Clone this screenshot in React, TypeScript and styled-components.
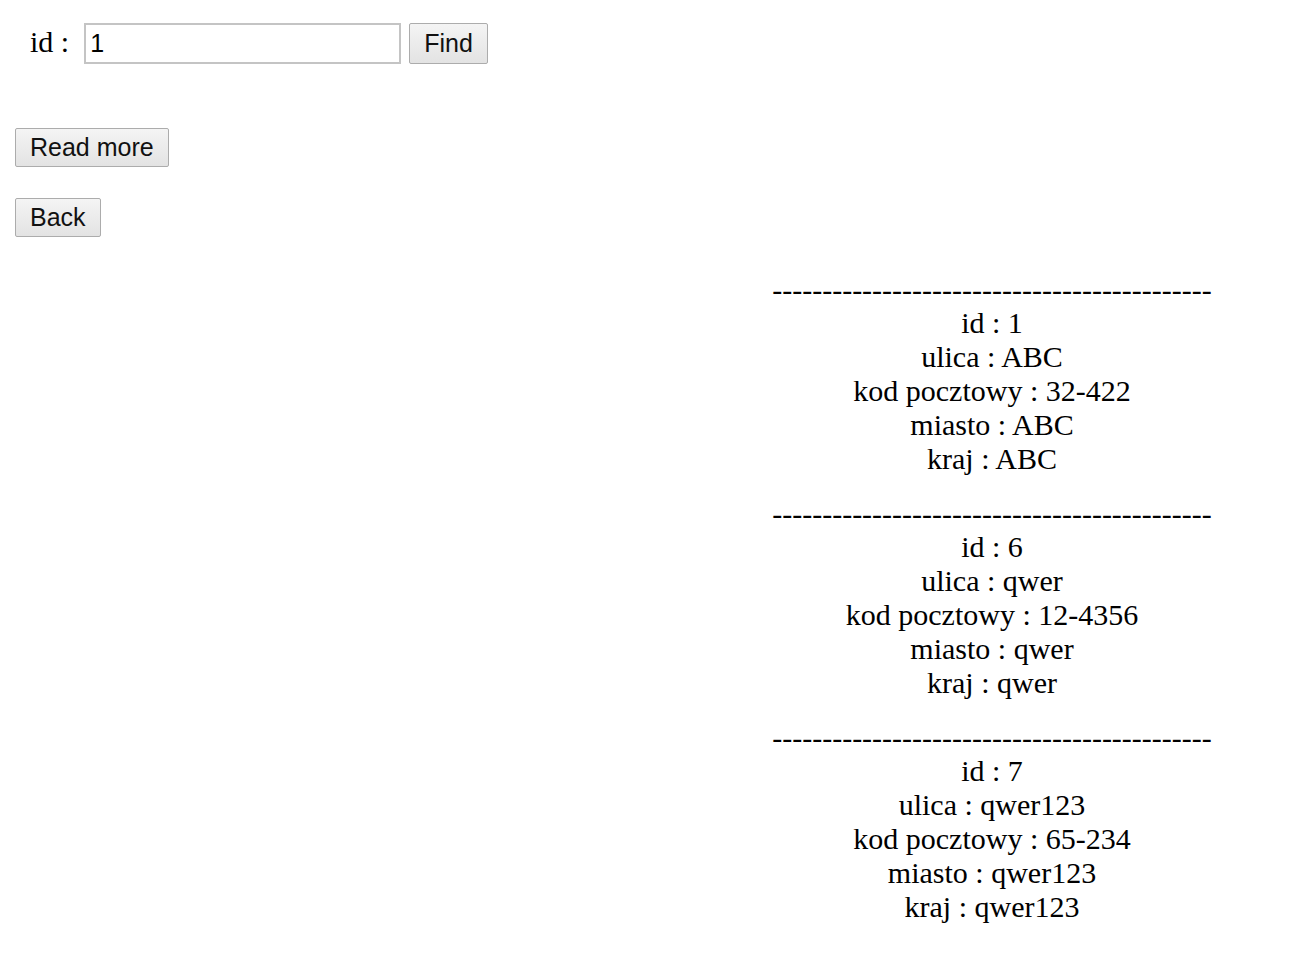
import React from 'react'
import styled, { createGlobalStyle } from 'styled-components'

const GlobalStyle = createGlobalStyle`
  body {
    margin: 0;
    background: #fff;
    color: #000;
    font-family: "Liberation Serif", "Times New Roman", serif;
    font-size: 30px;
  }
`

const Page = styled.div`
  padding: 23px 15px 40px 15px;
`

const SearchRow = styled.form`
  display: flex;
  align-items: center;
  padding-left: 15px;
  height: 41px;
`

const Label = styled.label`
  margin-right: 15px;
  line-height: 1;
  position: relative;
  top: -2px;
`

const TextInput = styled.input`
  box-sizing: border-box;
  width: 317px;
  height: 41px;
  border: 2px solid #c4c4c4;
  padding: 0 4px;
  font-family: "Liberation Sans", Arial, sans-serif;
  font-size: 25px;
  color: #000;
  outline: none;
`

const Button = styled.button<{ $gap?: number }>`
  box-sizing: border-box;
  height: ${p => p.$gap ? 41 : 39}px;
  padding: 0 14px;
  margin-left: ${p => p.$gap ?? 0}px;
  border: 1px solid #acacac;
  border-radius: 2px;
  background: linear-gradient(#f4f4f4, #e3e3e3);
  font-family: "Liberation Sans", Arial, sans-serif;
  font-size: 25px;
  color: #111;
  cursor: pointer;
`

const Actions = styled.div`
  display: flex;
  flex-direction: column;
  align-items: flex-start;
  gap: 31px;
  margin-top: 64px;
`

const Records = styled.div`
  width: 440px;
  margin: 35px 0 0 757px;
  text-align: center;
  line-height: 34px;
`

const Record = styled.div`
  margin-bottom: 20px;
`

const Divider = styled.div`
  white-space: nowrap;
  position: relative;
  top: 1px;
`

interface Address {
  id: number
  ulica: string
  kod: string
  miasto: string
  kraj: string
}

const addresses: Address[] = [
  { id: 1, ulica: 'ABC', kod: '32-422', miasto: 'ABC', kraj: 'ABC' },
  { id: 6, ulica: 'qwer', kod: '12-4356', miasto: 'qwer', kraj: 'qwer' },
  { id: 7, ulica: 'qwer123', kod: '65-234', miasto: 'qwer123', kraj: 'qwer123' },
]

const App: React.FC = () => (
  <Page>
    <GlobalStyle />
    <SearchRow onSubmit={e => e.preventDefault()}>
      <Label htmlFor="id">id :</Label>
      <TextInput id="id" defaultValue="1" />
      <Button $gap={8}>Find</Button>
    </SearchRow>
    <Actions>
      <Button>Read more</Button>
      <Button>Back</Button>
    </Actions>
    <Records>
      {addresses.map(a => (
        <Record key={a.id}>
          <Divider>{'-'.repeat(44)}</Divider>
          <div>id : {a.id}</div>
          <div>ulica : {a.ulica}</div>
          <div>kod pocztowy : {a.kod}</div>
          <div>miasto : {a.miasto}</div>
          <div>kraj : {a.kraj}</div>
        </Record>
      ))}
    </Records>
  </Page>
)

export default App
